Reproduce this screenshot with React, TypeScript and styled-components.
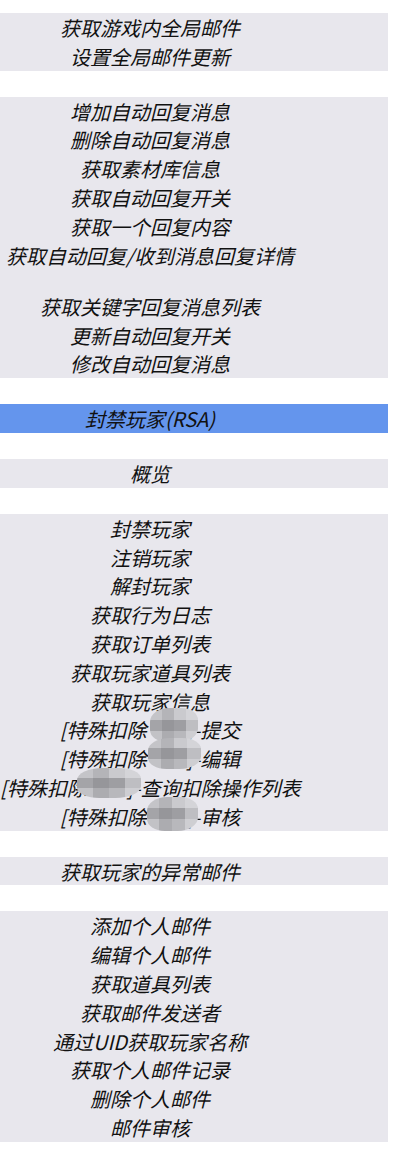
import styled, { createGlobalStyle } from "styled-components";

const GlobalStyle = createGlobalStyle`
  body {
    margin: 0;
    background: #ffffff;
    font-family: "Noto Sans CJK SC", "Noto Sans", sans-serif;
  }
`;

const Page = styled.div`
  width: 388px;
  padding-top: 13px;
  display: flex;
  flex-direction: column;
  gap: 26px;
`;

const Group = styled.ul<{ $active?: boolean }>`
  margin: 0;
  padding: 0;
  list-style: none;
  background: ${(p) => (p.$active ? "#6495ed" : "#e8e7ed")};
`;

const Item = styled.li<{ $spaced?: boolean }>`
  box-sizing: border-box;
  width: 300px;
  height: 28.8px;
  padding-top: 1px;
  text-align: center;
  white-space: nowrap;
  font-size: 20px;
  line-height: 28.8px;
  font-style: italic;
  color: #111111;
  margin-top: ${(p) => (p.$spaced ? "22.4px" : "0")};
`;

// 打码区域
const Hidden = styled.span`
  display: inline-block;
  position: relative;
  width: 40px;
  height: 20px;
  vertical-align: -3px;
`;

const Mosaic = styled.span<{ $left: number; $top: number; $w: number; $h: number }>`
  position: absolute;
  left: ${(p) => p.$left}px;
  top: ${(p) => p.$top}px;
  width: ${(p) => p.$w}px;
  height: ${(p) => p.$h}px;
  display: grid;
  grid-template-columns: repeat(4, 1fr);
  grid-template-rows: repeat(3, 1fr);
  border-radius: 40% 35% 40% 35%;
  overflow: hidden;
  filter: blur(0.6px);
`;

const Cell = styled.span<{ $c: string }>`
  background: ${(p) => p.$c};
`;

const shades = [
  "#c4c4c8", "#b4b4b8", "#cacace", "#d4d4d8",
  "#a4a4a8", "#96969a", "#9e9ea2", "#bebec2",
  "#c2c2c6", "#acacb0", "#b8b8bc", "#ceced2",
];

function Redact({ left, top, w, h }: { left: number; top: number; w: number; h: number }) {
  return (
    <Hidden>
      <Mosaic $left={left} $top={top} $w={w} $h={h}>
        {shades.map((c, i) => (
          <Cell key={i} $c={c} />
        ))}
      </Mosaic>
    </Hidden>
  );
}

export default function App() {
  return (
    <>
      <GlobalStyle />
      <Page>
        <Group>
          <Item>获取游戏内全局邮件</Item>
          <Item>设置全局邮件更新</Item>
        </Group>
        <Group>
          <Item>增加自动回复消息</Item>
          <Item>删除自动回复消息</Item>
          <Item>获取素材库信息</Item>
          <Item>获取自动回复开关</Item>
          <Item>获取一个回复内容</Item>
          <Item>获取自动回复/收到消息回复详情</Item>
          <Item $spaced>获取关键字回复消息列表</Item>
          <Item>更新自动回复开关</Item>
          <Item>修改自动回复消息</Item>
        </Group>
        <Group $active>
          <Item>封禁玩家(RSA)</Item>
        </Group>
        <Group>
          <Item>概览</Item>
        </Group>
        <Group>
          <Item>封禁玩家</Item>
          <Item>注销玩家</Item>
          <Item>解封玩家</Item>
          <Item>获取行为日志</Item>
          <Item>获取订单列表</Item>
          <Item>获取玩家道具列表</Item>
          <Item>获取玩家信息</Item>
          <Item>
            [特殊扣除
            <Redact left={3} top={-13} w={48} h={34} />
            ]-提交
          </Item>
          <Item>
            [特殊扣除
            <Redact left={1} top={-12} w={53} h={31} />
            ]-编辑
          </Item>
          <Item>
            [特殊扣除
            <Redact left={-10} top={-11} w={64} h={30} />
            ]-查询扣除操作列表
          </Item>
          <Item>
            [特殊扣除
            <Redact left={0} top={-11} w={51} h={34} />
            ]-审核
          </Item>
        </Group>
        <Group>
          <Item>获取玩家的异常邮件</Item>
        </Group>
        <Group>
          <Item>添加个人邮件</Item>
          <Item>编辑个人邮件</Item>
          <Item>获取道具列表</Item>
          <Item>获取邮件发送者</Item>
          <Item>通过UID获取玩家名称</Item>
          <Item>获取个人邮件记录</Item>
          <Item>删除个人邮件</Item>
          <Item>邮件审核</Item>
        </Group>
      </Page>
    </>
  );
}
